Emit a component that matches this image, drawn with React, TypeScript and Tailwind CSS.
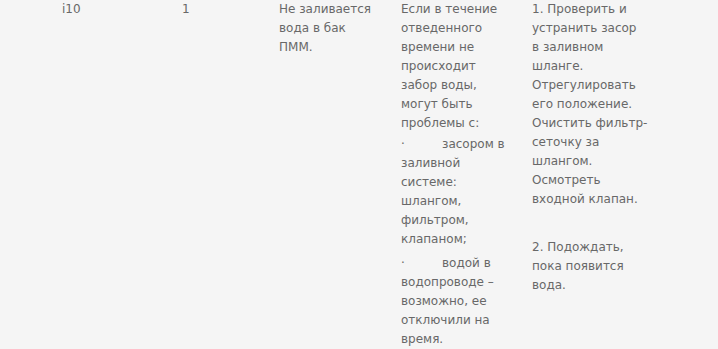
const problem = ['Не заливается', 'вода в бак', 'ПММ.'];

const causeIntro = [
  'Если в течение',
  'отведенного',
  'времени не',
  'происходит',
  'забор воды,',
  'могут быть',
  'проблемы с:',
];

const causeA = ['заливной', 'системе:', 'шлангом,', 'фильтром,', 'клапаном;'];
const causeB = ['водопроводе –', 'возможно, ее', 'отключили на', 'время.'];

const fixA = [
  '1. Проверить и',
  'устранить засор',
  'в заливном',
  'шланге.',
  'Отрегулировать',
  'его положение.',
  'Очистить фильтр-',
  'сеточку за',
  'шлангом.',
  'Осмотреть',
  'входной клапан.',
];
const fixB = ['2. Подождать,', 'пока появится', 'вода.'];

function Lines({ items }: { items: string[] }) {
  return (
    <>
      {items.map((line) => (
        <div key={line} className="whitespace-nowrap">
          {line}
        </div>
      ))}
    </>
  );
}

export default function App() {
  return (
    <div
      className="w-[718px] h-[349px] overflow-hidden bg-[#f5f5f5] text-[#686868] text-[12px] leading-[19px]"
      style={{ fontFamily: '"DejaVu Sans", Verdana, sans-serif' }}
    >
      <div className="flex pl-[62px]">
        {/* Code */}
        <div className="w-[120px] shrink-0">i10</div>

        {/* Number */}
        <div className="w-[97px] shrink-0">1</div>

        {/* Symptom */}
        <div className="w-[122px] shrink-0">
          <Lines items={problem} />
        </div>

        {/* Cause */}
        <div className="w-[131px] shrink-0">
          <Lines items={causeIntro} />
          <div className="mt-[2px] flex whitespace-nowrap">
            <span className="w-[41px]">·</span>засором в
          </div>
          <Lines items={causeA} />
          <div className="mt-[5px] flex whitespace-nowrap">
            <span className="w-[41px]">·</span>водой в
          </div>
          <Lines items={causeB} />
        </div>

        {/* Fix */}
        <div className="flex-1">
          <Lines items={fixA} />
          <div className="mt-[29px]">
            <Lines items={fixB} />
          </div>
        </div>
      </div>
    </div>
  );
}
